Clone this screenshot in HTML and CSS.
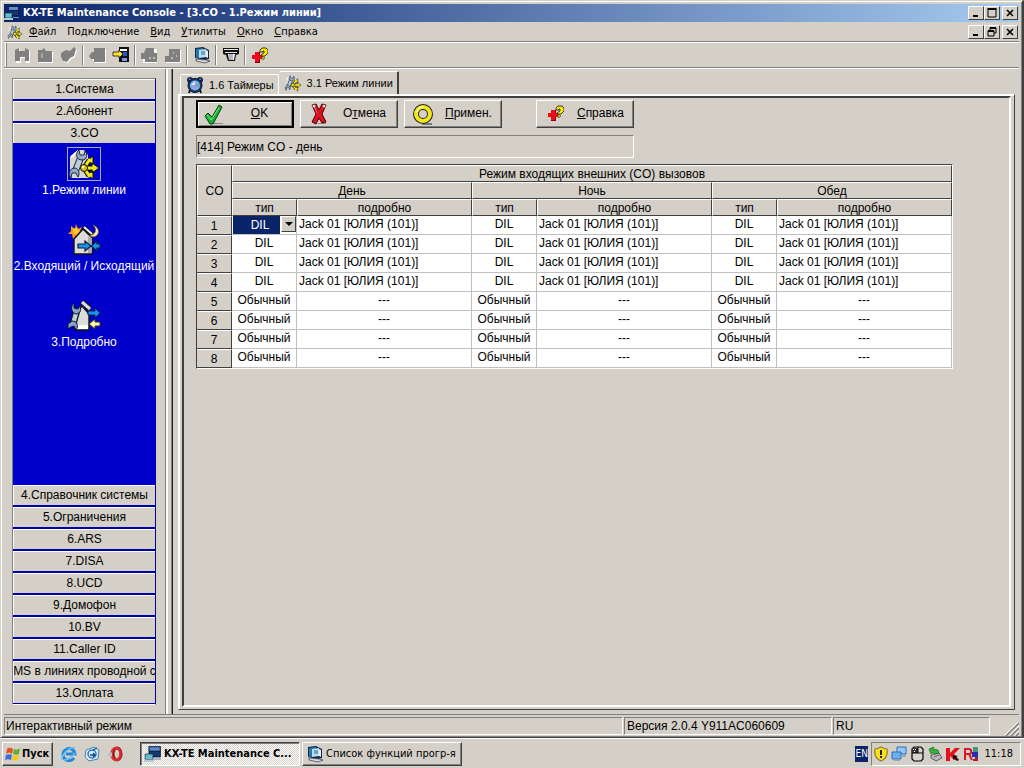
FILE: index.html
```html
<!DOCTYPE html>
<html lang="ru">
<head>
<meta charset="utf-8">
<title>KX-TE Maintenance Console - [3.CO - 1.Режим линии]</title>
<link rel="stylesheet" href="styles.css">
</head>
<body>
<svg class="defs" aria-hidden="true">
  <symbol id="app" viewBox="0 0 16 16">
    <path d="M4 1h11v10H4z" fill="#102050"/><path d="M5 2h9v3H5z" fill="#5c8fc8"/><path d="M5 6h9v4H5z" fill="#16386e"/>
    <path d="M1 8h7v5H1z" fill="#5ec0d0" stroke="#123" stroke-width=".6"/><path d="M0 13h9v2H0z" fill="#b8c8d0"/><path d="M9 12h6v1H9z" fill="#8090a8"/>
  </symbol>
  <symbol id="line" viewBox="0 0 34 34">
    <path d="M3 10 11 3h6l4 5v23H3z" fill="#d8d8d0"/><path d="M4 10 11 4" stroke="#fff" stroke-width="2"/>
    <path d="M14 10 8 25" stroke="#222" stroke-width="7"/><path d="M14 10 8 25" stroke="#b8cce0" stroke-width="5"/>
    <path d="m12 3 1 5 4 0 1-4c3 3 2 9-3 9-6 0-7-7-3-10zM4 31l1-5 4 0 2 4c2-3 1-8-3-9-6 0-7 7-4 10z" fill="#90acd0" stroke="#223" stroke-width="1"/>
    <path d="M17 21h8M17 21l5-8M17 21l5 8" stroke="#111" stroke-width="5"/>
    <path d="m20 14 6-5v8zM20 27l6 5v-8zM25 16l7 5-7 5z" fill="#f4e810" stroke="#111" stroke-width="1"/>
    <path d="M17 21h9M17 21l6-9M17 21l6 9" stroke="#f8ec18" stroke-width="3"/><circle cx="17" cy="21" r="3.5" fill="#d8c010" stroke="#111"/><circle cx="16" cy="20" r="1.3" fill="#fff8a0"/>
  </symbol>
  <symbol id="inout" viewBox="0 0 34 34">
    <path d="m4 3 4 3 1-5 2 5 4-2-2 4 3 2-4 1 1 4-4-2-3 3-1-5-4 0 3-3z" fill="#ff9c08"/><circle cx="9" cy="8" r="3" fill="#ffc838"/>
    <path d="M7 16 16 6l9 9v16H7z" fill="#dcdcdc" stroke="#111" stroke-width="1.4"/><path d="m21 14 4 1v15h-4z" fill="#aaa"/><path d="m16 4 9 7" stroke="#111" stroke-width="4"/><path d="m17 4 8 7" stroke="#eee" stroke-width="2"/>
    <path d="M26 2c5 5 2 10-4 11 9 4 14-7 4-11z" fill="#ffe8a0" stroke="#6b5510" stroke-width=".7"/>
    <path d="M11 21h7v-3l6 5-6 5v-3h-7zM33 21h-3v-3l-6 5 6 5v-3h3z" fill="#1494ec" stroke="#102040" stroke-width="1.2"/>
  </symbol>
  <symbol id="detail" viewBox="0 0 34 34">
    <path d="M10 13 15 7l7 8v16H8z" fill="#dcdcdc" stroke="#111" stroke-width="1.4"/><path d="M15 3l8 7" stroke="#111" stroke-width="5"/><path d="M15 3l8 7" stroke="#ddd" stroke-width="3"/>
    <path d="M9 26h12v4H9z" fill="#fff"/>
    <path d="M10 11 6 25" stroke="#111" stroke-width="7"/><path d="M10 11 6 25" stroke="#b8d0e4" stroke-width="4.500"/>
    <path d="M7 4v5l4 1 2-3c2 5-1 8-4 8-5-1-6-8-2-11zM1 30v-5l4-3c5 0 7 5 4 9l-2-4-3 1z" fill="#84a4cc" stroke="#112" stroke-width="1"/>
    <path d="M21 12h7v-3l5 5-5 5v-3h-7z" fill="#1494ec" stroke="#102040"/><path d="M33 23h-5v-3l-6 5 6 5v-3h5z" fill="#fff4a0" stroke="#333"/>
  </symbol>
  <symbol id="help" viewBox="0 0 16 16">
    <path d="M3 5h5v3h3v4H8v4H3v-4H0V8h3z" fill="#800010"/><path d="M3 5h4v3h3v4H7v3H3v-3H0V8h3z" fill="#f00818"/>
    <path d="M8 5V3l2-2h4l2 2v3l-3 3H9V8l3-2V4h-1v1z" fill="#ffe808" stroke="#111" stroke-width=".8"/><circle cx="11" cy="11" r="1.400" fill="#ffe808" stroke="#111" stroke-width=".6"/>
  </symbol>
  <symbol id="pc" viewBox="0 0 18 18">
    <path d="m2 2 8-1 6 3v9l-4 1-10-2z" fill="#102848"/><path d="m3 3 7-1v9l-7 1z" fill="#2878b0"/><path d="m6 4 7-1v8l-7 1z" fill="#b8e0f0"/><path d="M13 4l2 1v7l-2-1z" fill="#e8f0f8"/><path d="M8 6h4M8 8h4" stroke="#286890"/><path d="m3 13 10 1 4 1-5 2-9-2z" fill="#d8dce0" stroke="#334" stroke-width=".7"/>
  </symbol>
  <symbol id="clock" viewBox="0 0 18 18">
    <circle cx="4" cy="4" r="3" fill="#182858"/><circle cx="14" cy="4" r="3" fill="#182858"/><path d="m3 3 3 1M15 3l-3 1" stroke="#6a9ae0"/>
    <path d="m4 14-1 3M14 14l1 3" stroke="#111" stroke-width="2"/><circle cx="9" cy="9.500" r="7" fill="#18387c" stroke="#111"/><circle cx="9" cy="9.500" r="5" fill="#80b0e8"/><path d="M9 9V5L5 9z" fill="#d8f0f8"/><path d="m9 10 4-3v4z" fill="#40b890"/><circle cx="9" cy="10" r="1.500" fill="#d878c8"/>
  </symbol>
</svg>

<div class="window">
  <header class="titlebar">
    <svg class="i16"><use href="#app"/></svg>
    <h1>KX-TE Maintenance Console - [3.CO - 1.Режим линии]</h1>
    <div class="controls">
      <button aria-label="Свернуть"><svg viewBox="0 0 12 10"><path d="M3 8h5" stroke="#000" stroke-width="2"/></svg></button>
      <button aria-label="Развернуть"><svg viewBox="0 0 12 10"><path d="M2 1h9M2 0v9h8V1" fill="none" stroke="#000"/><path d="M2 1h8" stroke="#000" stroke-width="2"/></svg></button>
      <button class="close" aria-label="Закрыть"><svg viewBox="0 0 12 10"><path d="m3 2 6 6M9 2 3 8" stroke="#000" stroke-width="1.6"/></svg></button>
    </div>
  </header>
  <nav class="menubar">
    <svg class="i16"><use href="#line"/></svg>
    <button><u>Ф</u>айл</button><button>По<u>д</u>ключение</button><button><u>В</u>ид</button><button><u>У</u>тилиты</button><button><u>О</u>кно</button><button><u>С</u>правка</button>
    <div class="controls">
      <button aria-label="Свернуть окно"><svg viewBox="0 0 12 10"><path d="M3 8h5" stroke="#000" stroke-width="2"/></svg></button>
      <button aria-label="Восстановить окно"><svg viewBox="0 0 12 10"><path d="M4 3V1h6v5H8" fill="none" stroke="#000"/><path d="M4 1h6M2 4h6" stroke="#000" stroke-width="2"/><path d="M2 4v5h6V4" fill="none" stroke="#000"/></svg></button>
      <button class="close" aria-label="Закрыть окно"><svg viewBox="0 0 12 10"><path d="m3 2 6 6M9 2 3 8" stroke="#000" stroke-width="1.6"/></svg></button>
    </div>
  </nav>
  <div class="toolbar" role="toolbar">
    <button class="off" aria-label="Подключить"><svg viewBox="0 0 18 18"><path class="sh" d="M1 4 5 2v5h6V2l4 2v12h-4v-5H6v5H1z" transform="translate(1 1)"/><path d="M1 4 5 2v3h6V2l4 2v11h-4v-4H6v4H1z"/></svg></button>
    <button class="off" aria-label="Соединение"><svg viewBox="0 0 18 18"><path class="sh" d="M1 4h4l2-2 2 3h6v11H1z" transform="translate(1 1)"/><path d="M1 4h4l2-2 2 3h6v11H1z"/><path d="M5 7v5" stroke="#d4d0c8"/></svg></button>
    <button class="off" aria-label="Отключить"><svg viewBox="0 0 18 18"><path class="sh" d="m1 7 5-3 4 1 4-4 2 2-2 7-4 2-3 4-4-1-2-4z" transform="translate(1 1)"/><path d="m1 7 5-3 4 1 4-4 2 2-2 7-4 2-3 4-4-1-2-4z"/></svg></button>
    <i></i>
    <button class="off" aria-label="Загрузить"><svg viewBox="0 0 18 18"><path class="sh" d="M5 2h11v14H5l-4-6z" transform="translate(1 1)"/><path d="M5 2h11v14H5v-3H2l-2-3 3-4h2z"/></svg></button>
    <button aria-label="Сохранить"><svg viewBox="0 0 18 18"><path d="M7 1h10v15H7z" fill="#111"/><path d="M8 3h7v2H8z" fill="#fff"/><path d="M11 6h4v4h-4z" fill="#2858c8"/><path d="M10 12h5v3h-5z" fill="#7898e8"/><path d="M1 6h6V4l4 4-4 4v-2H1z" fill="#ffe438" stroke="#111" stroke-width=".8"/></svg></button>
    <i></i>
    <button class="off" aria-label="Передать"><svg viewBox="0 0 18 18"><path class="sh" d="M5 2h10v14H1v-6z" transform="translate(1 1)"/><path d="M5 2h8v5h3v9H4v-3H0V7h3z"/><path d="M8 12h2M12 12h2" stroke="#fff"/></svg></button>
    <button class="off" aria-label="Принять"><svg viewBox="0 0 18 18"><path class="sh" d="M5 3h11v13H1v-6h4z" transform="translate(1 1)"/><path d="M5 3h11v13H1v-6h4z"/><path d="M9 7h1M7 12h2M12 10h1" stroke="#fff"/></svg></button>
    <i></i>
    <button aria-label="Компьютер"><svg><use href="#pc"/></svg></button>
    <i></i>
    <button aria-label="Печать"><svg viewBox="0 0 18 18"><path d="M1 2h16v6l-3 1-1 6H6L4 9 1 8z" fill="#111"/><path d="M2 3h14v1H2zM3 6h12v1H3z" fill="#e8e8e8"/><path d="M6 8h7l-1 6H7z" fill="#fff"/><path d="M8 8v6M10 8v6" stroke="#668"/></svg></button>
    <i></i>
    <button aria-label="Справка"><svg class="small"><use href="#help"/></svg></button>
  </div>

  <div class="work">
    <aside class="side">
      <nav class="list">
        <button>1.Система</button><button>2.Абонент</button><button>3.CO</button>
        <div class="panel">
          <a href="#" class="cur"><svg><use href="#line"/></svg><span>1.Режим линии</span></a>
          <a href="#"><svg><use href="#inout"/></svg><span>2.Входящий / Исходящий</span></a>
          <a href="#"><svg><use href="#detail"/></svg><span>3.Подробно</span></a>
        </div>
        <button>4.Справочник системы</button><button>5.Ограничения</button><button>6.ARS</button><button>7.DISA</button><button>8.UCD</button><button>9.Домофон</button><button>10.BV</button><button>11.Caller ID</button><button class="clip"><span>MS в линиях проводной с</span></button><button>13.Оплата</button>
      </nav>
    </aside>
    <main>
      <div class="tabs" role="tablist">
        <button role="tab"><svg class="i18"><use href="#clock"/></svg>1.6 Таймеры</button>
        <button role="tab" class="active" aria-selected="true"><svg class="i18"><use href="#line"/></svg>3.1 Режим линии</button>
      </div>
      <section class="page">
        <div class="inner">
          <div class="actions">
            <button class="default"><svg viewBox="0 0 22 22"><path d="M8 20h12v1H8z" fill="#888"/><path d="m2 13 3-3 4 4 7-12 3 2-9 17H7z" fill="#18b030" stroke="#064010"/><path d="m4 12 4 5 8-12" fill="none" stroke="#80f080"/></svg><span><u>O</u>K</span></button>
            <button><svg viewBox="0 0 22 22"><path d="M10 20h8v1h-8z" fill="#888"/><path d="m4 2 4-1 3 6 3-6 4 1-4 9 4 8-4 1-3-5-3 6-4-2 4-8z" fill="#e01020" stroke="#400008"/><path d="m6 3 3 7" stroke="#ff7080"/><circle cx="6" cy="3" r="1.500" fill="#ddd"/><circle cx="16" cy="3" r="1.500" fill="#ddd"/></svg><span>О<u>т</u>мена</span></button>
            <button><svg viewBox="0 0 22 22"><path d="M10 21h10" stroke="#777" stroke-width="2"/><circle cx="11" cy="11" r="7" fill="none" stroke="#222" stroke-width="6"/><circle cx="11" cy="11" r="7" fill="none" stroke="#f0e818" stroke-width="4"/><path d="M5 9a6 6 0 0 1 6-5" fill="none" stroke="#ffffb0" stroke-width="1.500"/></svg><span><u>П</u>римен.</span></button>
            <button class="help"><svg viewBox="-4 -2 22 22"><use href="#help" width="16" height="16"/></svg><span><u>С</u>правка</span></button>
          </div>
          <div class="info">[414] Режим CO - день</div>
          <table>
            <colgroup><col class="cn"><col class="ct"><col class="cd"><col class="ct"><col class="cd"><col class="ct"><col class="cd"></colgroup>
            <thead>
              <tr><th rowspan="3" scope="col">CO</th><th colspan="6" scope="colgroup">Режим входящих внешних (CO) вызовов</th></tr>
              <tr><th colspan="2" scope="colgroup">День</th><th colspan="2" scope="colgroup">Ночь</th><th colspan="2" scope="colgroup">Обед</th></tr>
              <tr><th scope="col">тип</th><th scope="col">подробно</th><th scope="col">тип</th><th scope="col">подробно</th><th scope="col">тип</th><th scope="col">подробно</th></tr>
            </thead>
            <tbody>
              <tr><th scope="row">1</th><td class="edit"><div class="combo"><select aria-label="Тип, день, CO 1"><option>DIL</option><option>Обычный</option></select><span></span></div></td><td class="l">Jack 01 [ЮЛИЯ (101)]</td><td>DIL</td><td class="l">Jack 01 [ЮЛИЯ (101)]</td><td>DIL</td><td class="l">Jack 01 [ЮЛИЯ (101)]</td></tr>
              <tr><th scope="row">2</th><td>DIL</td><td class="l">Jack 01 [ЮЛИЯ (101)]</td><td>DIL</td><td class="l">Jack 01 [ЮЛИЯ (101)]</td><td>DIL</td><td class="l">Jack 01 [ЮЛИЯ (101)]</td></tr>
              <tr><th scope="row">3</th><td>DIL</td><td class="l">Jack 01 [ЮЛИЯ (101)]</td><td>DIL</td><td class="l">Jack 01 [ЮЛИЯ (101)]</td><td>DIL</td><td class="l">Jack 01 [ЮЛИЯ (101)]</td></tr>
              <tr><th scope="row">4</th><td>DIL</td><td class="l">Jack 01 [ЮЛИЯ (101)]</td><td>DIL</td><td class="l">Jack 01 [ЮЛИЯ (101)]</td><td>DIL</td><td class="l">Jack 01 [ЮЛИЯ (101)]</td></tr>
              <tr><th scope="row">5</th><td>Обычный</td><td>---</td><td>Обычный</td><td>---</td><td>Обычный</td><td>---</td></tr>
              <tr><th scope="row">6</th><td>Обычный</td><td>---</td><td>Обычный</td><td>---</td><td>Обычный</td><td>---</td></tr>
              <tr><th scope="row">7</th><td>Обычный</td><td>---</td><td>Обычный</td><td>---</td><td>Обычный</td><td>---</td></tr>
              <tr><th scope="row">8</th><td>Обычный</td><td>---</td><td>Обычный</td><td>---</td><td>Обычный</td><td>---</td></tr>
            </tbody>
          </table>
        </div>
      </section>
    </main>
  </div>

  <footer class="status">
    <span class="mode">Интерактивный режим</span><span class="ver">Версия 2.0.4 Y911AC060609</span><span class="lang">RU</span>
    <svg viewBox="0 0 14 14"><path d="M1 14 14 1M6 14l8-8M11 14l3-3" stroke="#808080" stroke-width="1.500"/><path d="M0 13 13 0M5 13l9-9M10 13l4-4" stroke="#fff"/></svg>
  </footer>
</div>

<div class="taskbar">
  <button class="start"><svg class="i18" viewBox="0 0 18 18"><path d="M3 4c2-2 4-1 6 0L8 9C6 7 4 7 2 9z" fill="#e85020"/><path d="M10 4c2 1 4 1 6-1l-1 6c-2 1-4 1-6 0z" fill="#60b030"/><path d="M2 10c2-1 4-1 6 0l-1 5c-2-1-4-1-6 0z" fill="#3870d8"/><path d="M9 10c2 1 4 1 6 0l-1 5c-2 1-4 1-6 0z" fill="#f8c820"/></svg>Пуск</button>
  <div class="quick">
    <a href="#" aria-label="Internet Explorer"><svg viewBox="0 0 16 16"><path d="M13 12a6 6 0 1 1 1-4H5" fill="none" stroke="#2088d8" stroke-width="3"/><path d="M1 14C0 9 9 0 14 2M3 14c4 0 8-3 11-7" fill="none" stroke="#70c0f0" stroke-width="1.500"/></svg></a>
    <a href="#" aria-label="Outlook Express"><svg viewBox="0 0 16 16"><path d="m2 4 8-3 5 3-1 9-9 2-4-4z" fill="#d8ecf8" stroke="#5080a8"/><circle cx="8" cy="8" r="4" fill="none" stroke="#2878b8" stroke-width="1.500"/><path d="M6 9h5l-2-2m2 2-2 2M9 4l4-2" fill="none" stroke="#184880" stroke-width="1.300"/></svg></a>
    <a href="#" aria-label="Opera"><svg viewBox="0 0 16 16"><ellipse cx="10" cy="8" rx="4" ry="6" fill="none" stroke="#901018" stroke-width="3"/><ellipse cx="9" cy="8" rx="4.500" ry="6" fill="none" stroke="#d83030" stroke-width="2.500"/><path d="m0 9 5-3v5z" fill="#b8bcc0"/></svg></a>
  </div>
  <button class="task on"><svg class="i18" viewBox="0 0 16 16"><use href="#app"/></svg><span>KX-TE Maintenance C...</span></button>
  <button class="task"><svg class="i18"><use href="#pc"/></svg><span>Список функций прогр-я</span></button>
  <span class="kb">EN</span>
  <div class="tray">
    <svg viewBox="0 0 16 16"><path d="M8 1c2 1 4 2 6 2 1 6-1 10-6 12C3 13 1 9 2 3c2 0 4-1 6-2z" fill="#f8e020" stroke="#907820" stroke-width="1.200"/><path d="M8 4v5M8 10v2" stroke="#222" stroke-width="2"/></svg>
    <svg viewBox="0 0 16 16"><path d="M6 1h9v7H6z" fill="#90c8f8" stroke="#3868b0"/><path d="M1 6h9v7H1z" fill="#68b0f0" stroke="#3868b0"/><path d="M3 14h6v1H3zM10 9h5v2h-5z" fill="#98a8c0"/></svg>
    <svg viewBox="0 0 16 16"><path d="M5 1h7l2 2v10l-2 2H5l-2-2V3z" fill="#d8d4cc" stroke="#000" stroke-width="1.200"/><path d="M3 2h6v5H3z" fill="#333"/><path d="M3 7h11M9 1v6" stroke="#000"/><path d="M4 3h1v1H4zM6 3h1v1H6zM5 5h1v1H5z" fill="#fff"/></svg>
    <svg viewBox="0 0 16 16"><path d="m4 9 8-2 3 5-6 3-5-3z" fill="#b8b8b8" stroke="#444" stroke-width=".8"/><path d="M2 3 7 1l-1 2 5 1 1 3-5 1-1-2-2 2z" fill="#38b040" stroke="#187020" stroke-width=".7"/><path d="m7 11 5-2" stroke="#666"/></svg>
    <svg viewBox="0 0 16 16"><path d="M1 2h4v5l5-5h5L9 8l5 6H9l-4-4v5H1z" fill="#e81018"/><path d="m8 9 5 1-2 1 3 3-2 1-3-3-1 2z" fill="#111"/></svg>
    <svg viewBox="0 0 16 16"><path d="M2 14V3h4c3 0 3 5 0 5H3M6 8l3 6" fill="none" stroke="#d81828" stroke-width="2"/><path d="M10 1h5v5h-5z" fill="#409880"/><path d="M9 6h6v5H9z" fill="#2030b0"/><path d="M12 11h3v4h-5v-2h2z" fill="#a02030"/></svg>
    <time>11:18</time>
  </div>
</div>
</body>
</html>
```
FILE: styles.css
```css
* { box-sizing: border-box; }
html, body { height: 100%; margin: 0; }
body {
  display: flex; flex-direction: column; background: #d4d0c8; color: #000;
  font: 12px/14px "Liberation Sans", Arial, sans-serif;
}
button, select { font: inherit; color: inherit; margin: 0; padding: 0; border: 0; background: #d4d0c8; border-radius: 0; white-space: nowrap; }
.defs { position: absolute; width: 0; height: 0; }
svg { display: block; flex: none; }
.i16 { width: 16px; height: 16px; }
.i18 { width: 18px; height: 18px; }
u { text-underline-offset: 1px; }

.window {
  flex: 1; min-height: 0; display: flex; flex-direction: column;
  border: 1px solid #d4d0c8; border-right: 2px solid #404040; border-bottom: 1px solid #404040;
  box-shadow: inset 1px 1px #fff, inset -1px -1px #808080; padding: 3px 3px 1px;
}
.titlebar, .menubar, .toolbar, .taskbar {
  font-family: "DejaVu Sans Condensed", "DejaVu Sans", sans-serif; font-size: 11px;
}
.titlebar {
  display: flex; align-items: center; gap: 3px; height: 18px; flex: none;
  background: linear-gradient(90deg, #0a246a, #a6caf0); color: #fff;
}
.titlebar h1 { margin: 0; font-size: 11px; font-weight: bold; white-space: nowrap; }
.controls { display: flex; margin-left: auto; padding-right: 1px; color: #000; }
.controls button {
  width: 16px; height: 14px; display: grid; place-items: center; background: #d4d0c8;
  border: 1px solid; border-color: #fff #404040 #404040 #fff;
}
.controls .close { margin-left: 2px; }
.controls svg { width: 12px; height: 10px; }
.menubar { display: flex; align-items: center; gap: 1px; height: 20px; flex: none; padding-left: 3px; border-bottom: 1px solid #808080; }
.menubar > button { padding: 0 5px; }
.toolbar {
  display: flex; align-items: center; height: 26px; flex: none; padding-left: 7px; border-top: 1px solid #fff;
  border-bottom: 1px solid #808080; box-shadow: inset 1px 0 #d4d0c8, inset 2px 0 #fff, inset 3px 0 #808080;
}
.toolbar button { width: 23px; height: 22px; display: grid; place-items: center; background: none; }
.toolbar svg { width: 18px; height: 18px; }
.toolbar .small { width: 16px; height: 16px; }
.toolbar i { width: 2px; height: 20px; margin: 0 2px; border-left: 1px solid #808080; border-right: 1px solid #fff; }
.off { fill: #808080; }
.sh { fill: #fff; }

.work { flex: 1; min-height: 0; display: flex; border-top: 1px solid #fff; border-bottom: 1px solid #808080; }
.side { flex: none; padding: 9px 9px 9px 8px; display: flex; border-right: 1px solid #808080; box-shadow: 1px 0 #fff, 2px 0 #fff, 5px 0 #d4d0c8, 6px 0 #808080, 7px 0 #202020; }
.list {
  width: 144px; display: flex; flex-direction: column; gap: 2px; padding-bottom: 1px; background: #0000a8;
  border: 1px solid; border-color: #808080 #0000a8 #fff #808080;
}
.list > button { height: 20px; flex: none; overflow: hidden; border: 1px solid #fff; border-width: 1px 0 0 1px; text-align: center; padding-bottom: 1px; }
.list > .clip { display: flex; align-items: center; justify-content: center; }
.panel {
  flex: 1; margin: -2px 0; background: #00c; display: flex; flex-direction: column; align-items: center;
  gap: 26px; padding-top: 4px; color: #fff;
}
.panel a { color: inherit; text-decoration: none; display: flex; flex-direction: column; align-items: center; gap: 2px; white-space: nowrap; }
.panel svg { width: 34px; height: 34px; }
.cur svg { outline: 1px solid #aab; outline-offset: -1px; }

main { flex: 1; min-width: 0; padding: 2px 4px 4px 12px; display: flex; flex-direction: column; }
.tabs { display: flex; align-items: flex-end; height: 23px; flex: none; padding-left: 2px; font-size: 11px; }
.tabs button {
  height: 20px; display: flex; align-items: center; gap: 5px; padding: 0 4px 0 5px;
  border: 1px solid #fff; border-bottom: 0; border-radius: 2px 2px 0 0;
}
.tabs .active { height: 23px; padding-bottom: 1px; border-right: 2px solid #404040; border-left: 0; }
.page {
  flex: 1; min-height: 0; border: 1px solid; border-color: #fff #404040 #404040 #fff;
  box-shadow: inset 1px 1px #fff; padding: 1px 3px 2px 3px; display: flex;
}
.inner { flex: 1; min-width: 0; border: 2px solid; border-color: #404040 #fff #fff #404040; padding: 2px 12px; }
.actions { display: flex; gap: 6px; }
.actions button {
  width: 98px; height: 28px; display: flex; align-items: center; padding-left: 7px;
  border: 1px solid; border-color: #fff #404040 #404040 #fff; box-shadow: inset -1px -1px #808080;
}
.actions .default { border: 2px solid #000; padding-left: 5px; box-shadow: inset 1px 1px #fff, inset -1px -1px #808080; }
.actions svg { width: 22px; height: 22px; }
.actions span { flex: 1; text-align: center; padding: 0 0 2px 2px; }
.actions .help { margin-left: 28px; }
.info { width: 438px; max-width: 100%; height: 23px; margin-top: 7px; padding-top: 4px; border: 1px solid; border-color: #808080 #fff #fff #808080; }
table {
  table-layout: fixed; width: 757px; margin-top: 6px; border-collapse: separate; border-spacing: 0;
  border: 1px solid; border-color: #404040 #fff #fff #404040; background: #fff;
}
.cn { width: 35px; } .ct { width: 65px; } .cd { width: 175px; }
th, td { padding: 0; text-align: center; font-weight: normal; white-space: nowrap; overflow: hidden; line-height: 14px; }
th { background: #d4d0c8; border: 1px solid; border-color: #fff #404040 #404040 #fff; }
thead th { height: 17px; }
tbody th { height: 19px; border-left: 0; line-height: 14px; }
td { height: 19px; border: 1px solid #c0c0c0; border-width: 0 1px 1px 0; background: #fff; vertical-align: top; padding-top: 1px; }
td.l { text-align: left; padding-left: 2px; }
td.edit { padding: 0; }
.combo { position: relative; height: 18px; padding-left: 1px; display: flex; }
.combo select {
  flex: 1; height: 18px; appearance: none; background: linear-gradient(90deg, #0a246a 47px, #fff 47px);
  color: #fff; text-align: center; padding: 0 18px 1px 0;
}
.combo option { color: #000; background: #fff; }
.combo span {
  position: absolute; right: 0; top: 0; width: 15px; height: 16px; pointer-events: none; background: #d4d0c8;
  border: 1px solid; border-color: #fff #404040 #404040 #fff; display: grid; place-items: center;
}
.combo span::after { content: ""; border: 4px solid transparent; border-top-color: #000; border-bottom: 0; }

.status { display: flex; gap: 1px; height: 21px; flex: none; padding-top: 2px; }
.status span { height: 18px; padding: 1px 1px 0; border: 1px solid; border-color: #808080 #fff #fff #808080; white-space: nowrap; overflow: hidden; }
.mode { flex: 1; }
.status .ver { width: 208px; padding-left: 2px; }
.status .lang { width: 157px; padding-left: 2px; }
.status svg { width: 14px; height: 14px; margin: 5px 0 0 14px; }

.taskbar { height: 30px; flex: none; display: flex; align-items: center; padding: 0 3px 0 2px; border-top: 1px solid #fff; }
.start, .task {
  height: 24px; display: flex; align-items: center; border: 1px solid; border-color: #fff #404040 #404040 #fff;
  box-shadow: inset -1px -1px #808080;
}
.start { width: 51px; font-weight: bold; padding-left: 1px; }
.quick { display: flex; gap: 7px; padding: 0 17px 0 8px; }
.quick svg { width: 16px; height: 16px; }
.task { width: 160px; gap: 2px; padding: 0 3px; margin-right: 2px; }
.task span { overflow: hidden; }
.task.on {
  font-weight: bold; border-color: #404040 #fff #fff #404040; box-shadow: inset 1px 1px #808080;
  background: repeating-conic-gradient(#fff 0 25%, #d4d0c8 0 50%) 0 0 / 2px 2px;
}
.kb { margin-left: auto; width: 13px; height: 16px; background: #0a246a; color: #fff; line-height: 16px; overflow: hidden; font-size: 10px; }
.tray {
  height: 24px; margin-left: 3px; padding: 0 7px 0 1px; display: flex; align-items: center; gap: 2px;
  border: 1px solid; border-color: #808080 #fff #fff #808080;
}
.tray svg { width: 16px; height: 16px; }
.tray time { margin-left: 3px; }
```
